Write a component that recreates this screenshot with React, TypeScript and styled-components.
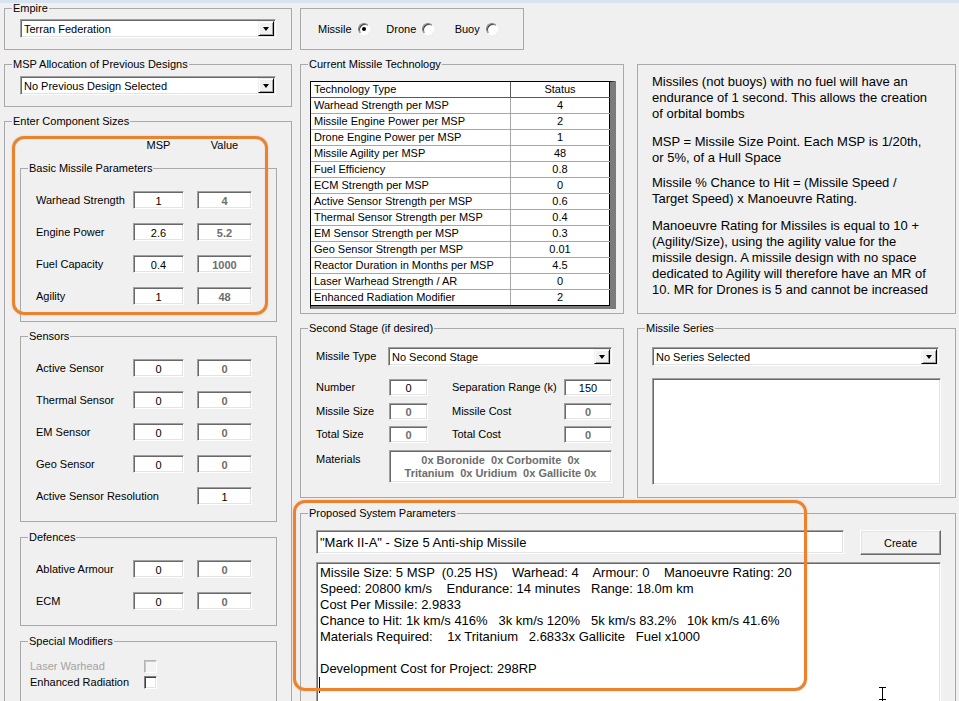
import React from "react";
import styled, { createGlobalStyle } from "styled-components";

const GlobalStyle = createGlobalStyle`
  html, body {
    margin: 0;
    padding: 0;
    background: #f0f0f0;
  }
  body {
    font-family: "Liberation Sans", Arial, sans-serif;
    font-size: 11px;
    color: #000;
    overflow: hidden;
  }
`;

const Window = styled.div`
  position: relative;
  width: 959px;
  height: 701px;
  overflow: hidden;
  background: #f0f0f0;
`;

const TitleEdge = styled.div`
  height: 3px;
  background: #d8e3f1;
`;

const Columns = styled.div`
  display: flex;
  gap: 8px;
  padding-left: 4px;
`;

const LeftColumn = styled.div`
  width: 288px;
  display: flex;
  flex-direction: column;
  gap: 9px;
`;

const RightArea = styled.div`
  width: 656px;
  display: flex;
  flex-direction: column;
`;

const PanelRow = styled.div<{ $mt: number }>`
  display: flex;
  align-items: flex-start;
  gap: 13px;
  margin-top: ${(p) => p.$mt}px;
`;

const Group = styled.fieldset<{ $w: number; $h: number; $mt?: number }>`
  box-sizing: border-box;
  width: ${(p) => p.$w}px;
  height: ${(p) => p.$h}px;
  margin: ${(p) => p.$mt ?? 0}px 0 0 0;
  padding: 0;
  border: 1px solid #a9a9a9;
  min-width: 0;
  flex-shrink: 0;
`;

const Legend = styled.legend`
  margin-left: 7px;
  padding: 0 1px;
  font-size: 11px;
  line-height: 10px;
  white-space: nowrap;
`;

const GroupBody = styled.div<{ $pt: number; $pl: number }>`
  display: flex;
  flex-direction: column;
  padding: ${(p) => p.$pt}px 0 0 ${(p) => p.$pl}px;
`;

const sunken = `
  box-sizing: border-box;
  background: #fff;
  border: 1px solid;
  border-color: #a0a0a0 #fff #fff #a0a0a0;
  box-shadow: inset 1px 1px 0 #696969, inset -1px -1px 0 #e3e3e3;
`;

const Combo = styled.div<{ $w: number }>`
  ${sunken}
  width: ${(p) => p.$w}px;
  height: 19px;
  display: flex;
  align-items: center;
  padding: 0 1px 0 3px;
  flex-shrink: 0;
`;

const ComboText = styled.span`
  flex: 1;
  white-space: nowrap;
  overflow: hidden;
`;

const DropButton = styled.span`
  box-sizing: border-box;
  width: 16px;
  height: 15px;
  background: #f0f0f0;
  border: 1px solid;
  border-color: #f0f0f0 #000 #000 #f0f0f0;
  box-shadow: inset 1px 1px 0 #fff, inset -1px -1px 0 #a0a0a0;
  display: flex;
  align-items: center;
  justify-content: center;

  &::after {
    content: "";
    border-left: 3.5px solid transparent;
    border-right: 3.5px solid transparent;
    border-top: 4px solid #000;
    margin-top: 1px;
  }
`;

const Field = styled.div<{ $w: number; $h?: number; $ro?: boolean; $ml?: number }>`
  ${sunken}
  width: ${(p) => p.$w}px;
  height: ${(p) => p.$h ?? 18}px;
  margin-left: ${(p) => p.$ml ?? 0}px;
  flex-shrink: 0;
  display: flex;
  align-items: center;
  justify-content: center;
  padding-top: 1px;
  color: ${(p) => (p.$ro ? "#6d6d6d" : "#000")};
  font-weight: ${(p) => (p.$ro ? "bold" : "normal")};
`;

/* ---------- left column ---------- */

const ColumnHeads = styled.div`
  display: grid;
  grid-template-columns: 51px 55px;
  column-gap: 13px;
  padding-left: 113px;
  height: 14px;
  line-height: 14px;
  text-align: center;
`;

const ParamList = styled.div`
  display: flex;
  flex-direction: column;
  gap: 14px;
`;

const ParamRow = styled.div`
  display: flex;
  align-items: center;
  height: 18px;
`;

const ParamLabel = styled.span<{ $w: number }>`
  width: ${(p) => p.$w}px;
  flex-shrink: 0;
  white-space: nowrap;
`;

const CheckRow = styled.div`
  display: flex;
  align-items: center;
  height: 16px;
`;

const CheckLabel = styled.span<{ $off?: boolean }>`
  width: 114px;
  white-space: nowrap;
  color: ${(p) => (p.$off ? "#a3a3a3" : "#000")};
`;

const CheckBox = styled.span<{ $off?: boolean }>`
  box-sizing: border-box;
  width: 13px;
  height: 13px;
  border: 1px solid;
  border-color: ${(p) => (p.$off ? "#b4b4b4 #fff #fff #b4b4b4" : "#808080 #fff #fff #808080")};
  box-shadow: ${(p) => (p.$off ? "inset 1px 1px 0 #c8c8c8" : "inset 1px 1px 0 #404040, inset -1px -1px 0 #e3e3e3")};
  background: ${(p) => (p.$off ? "#f4f4f4" : "#fff")};
`;

/* ---------- missile type ---------- */

const TypeBox = styled.div`
  box-sizing: border-box;
  width: 224px;
  height: 42px;
  margin-top: 5px;
  border: 1px solid #a9a9a9;
  display: flex;
  align-items: center;
  padding-left: 17px;
`;

const TypeOption = styled.span`
  width: 72px;
  display: flex;
  align-items: center;
  gap: 6px;
`;

const Radio = styled.span<{ $on?: boolean }>`
  box-sizing: border-box;
  width: 12px;
  height: 12px;
  border-radius: 50%;
  border: 1px solid;
  border-color: #808080 #fff #fff #808080;
  box-shadow: inset 1px 1px 0 #404040;
  background: #fff;
  display: flex;
  align-items: center;
  justify-content: center;

  &::after {
    content: "";
    display: ${(p) => (p.$on ? "block" : "none")};
    width: 4px;
    height: 4px;
    border-radius: 50%;
    background: #000;
  }
`;

/* ---------- technology table ---------- */

const TechGrid = styled.div`
  box-sizing: border-box;
  width: 306px;
  margin: 12px 0 0 9px;
  background: #fff;
  border-top: 1px solid #000;
  border-left: 1px solid #000;
  border-right: 6px solid #7b7b7b;
  border-bottom: 3px solid #7b7b7b;
`;

const TechRow = styled.div<{ $head?: boolean }>`
  box-sizing: border-box;
  display: flex;
  height: 16px;
  border-bottom: 1px solid ${(p) => (p.$head ? "#5a5a5a" : "#a7a7a7")};

  &:last-child {
    border-bottom-color: #000;
  }
`;

const TechName = styled.span<{ $head?: boolean }>`
  width: 200px;
  box-sizing: border-box;
  padding-left: 3px;
  line-height: 15px;
  white-space: nowrap;
  border-right: 1px solid ${(p) => (p.$head ? "#5a5a5a" : "#a7a7a7")};
`;

const TechValue = styled.span`
  flex: 1;
  text-align: center;
  line-height: 15px;
  border-right: 1px solid #000;
`;

/* ---------- info ---------- */

const InfoBox = styled.div`
  box-sizing: border-box;
  width: 319px;
  height: 250px;
  margin-top: 5px;
  border: 1px solid #a9a9a9;
  padding: 9px 0 0 14px;
  font-size: 13px;
  line-height: 16px;
`;

const InfoPara = styled.p<{ $mb: number }>`
  margin: 0 0 ${(p) => p.$mb}px;
  white-space: nowrap;
`;

/* ---------- second stage ---------- */

const StageRow = styled.div<{ $mt: number; $top?: boolean }>`
  display: flex;
  align-items: ${(p) => (p.$top ? "flex-start" : "center")};
  margin-top: ${(p) => p.$mt}px;
`;

const StageLabel = styled.span<{ $w: number; $ml?: number; $mt?: number }>`
  width: ${(p) => p.$w}px;
  margin-left: ${(p) => p.$ml ?? 0}px;
  margin-top: ${(p) => p.$mt ?? 0}px;
  flex-shrink: 0;
  white-space: nowrap;
  line-height: 13px;
`;

const MaterialsBox = styled.div`
  ${sunken}
  width: 223px;
  height: 33px;
  display: flex;
  flex-direction: column;
  justify-content: center;
  align-items: center;
  font-weight: bold;
  color: #6d6d6d;
  line-height: 13px;
  white-space: pre;
`;

const ListBox = styled.div`
  ${sunken}
  width: 289px;
  height: 107px;
  margin-top: 12px;
`;

/* ---------- proposed ---------- */

const NameRow = styled.div`
  display: flex;
  align-items: flex-start;
  gap: 16px;
  margin: 12px 0 0 15px;
`;

const NameField = styled.div`
  ${sunken}
  width: 528px;
  height: 24px;
  display: flex;
  align-items: center;
  padding-left: 3px;
  font-size: 13px;
  white-space: nowrap;
`;

const CreateButton = styled.button`
  box-sizing: border-box;
  width: 81px;
  height: 25px;
  padding: 0;
  font-family: "Liberation Sans", Arial, sans-serif;
  font-size: 11px;
  color: #000;
  background: #f2f2f2;
  border: 1px solid;
  border-color: #fff #696969 #696969 #fff;
  box-shadow: inset -1px -1px 0 #a0a0a0, inset 1px 1px 0 #e3e3e3;
`;

const Memo = styled.div`
  ${sunken}
  width: 625px;
  height: 200px;
  margin: 7px 0 0 15px;
  padding: 2px 0 0 3px;
  font-size: 13px;
  line-height: 16px;
  white-space: pre;
`;

const Caret = styled.span`
  display: inline-block;
  width: 1px;
  height: 16px;
  margin-left: -1px;
  background: #000;
  vertical-align: top;
`;

/* ---------- overlays ---------- */

const Highlight = styled.div<{ $x: number; $y: number; $w: number; $h: number }>`
  position: absolute;
  left: ${(p) => p.$x}px;
  top: ${(p) => p.$y}px;
  width: ${(p) => p.$w}px;
  height: ${(p) => p.$h}px;
  box-sizing: border-box;
  border: 3px solid #e9832f;
  border-radius: 12px;
  box-shadow: 0 0 2px rgba(233, 131, 47, 0.45), inset 0 0 1px rgba(233, 131, 47, 0.45);
  pointer-events: none;
`;

const PointerCursor = styled.svg`
  position: absolute;
  left: 878px;
  top: 686px;
`;

const techRows: [string, string][] = [
  ["Warhead Strength per MSP", "4"],
  ["Missile Engine Power per MSP", "2"],
  ["Drone Engine Power per MSP", "1"],
  ["Missile Agility per MSP", "48"],
  ["Fuel Efficiency", "0.8"],
  ["ECM Strength per MSP", "0"],
  ["Active Sensor Strength per MSP", "0.6"],
  ["Thermal Sensor Strength per MSP", "0.4"],
  ["EM Sensor Strength per MSP", "0.3"],
  ["Geo Sensor Strength per MSP", "0.01"],
  ["Reactor Duration in Months per MSP", "4.5"],
  ["Laser Warhead Strength / AR", "0"],
  ["Enhanced Radiation Modifier", "2"],
];

const basicParams: [string, string, string][] = [
  ["Warhead Strength", "1", "4"],
  ["Engine Power", "2.6", "5.2"],
  ["Fuel Capacity", "0.4", "1000"],
  ["Agility", "1", "48"],
];

const sensors: [string, string, string][] = [
  ["Active Sensor", "0", "0"],
  ["Thermal Sensor", "0", "0"],
  ["EM Sensor", "0", "0"],
  ["Geo Sensor", "0", "0"],
];

const defences: [string, string, string][] = [
  ["Ablative Armour", "0", "0"],
  ["ECM", "0", "0"],
];

const summary = [
  "Missile Size: 5 MSP  (0.25 HS)    Warhead: 4    Armour: 0    Manoeuvre Rating: 20",
  "Speed: 20800 km/s    Endurance: 14 minutes   Range: 18.0m km",
  "Cost Per Missile: 2.9833",
  "Chance to Hit: 1k km/s 416%   3k km/s 120%   5k km/s 83.2%   10k km/s 41.6%",
  "Materials Required:    1x Tritanium   2.6833x Gallicite   Fuel x1000",
  "",
  "Development Cost for Project: 298RP",
].join("\n");

const ComboBox = ({ w, text }: { w: number; text: string }) => (
  <Combo $w={w}>
    <ComboText>{text}</ComboText>
    <DropButton />
  </Combo>
);

const ParamRows = ({ rows }: { rows: [string, string, string][] }) => (
  <>
    {rows.map(([label, msp, value]) => (
      <ParamRow key={label}>
        <ParamLabel $w={97}>{label}</ParamLabel>
        <Field $w={51}>{msp}</Field>
        <Field $w={55} $ml={13} $ro>
          {value}
        </Field>
      </ParamRow>
    ))}
  </>
);

export default function App() {
  return (
    <Window>
      <GlobalStyle />
      <TitleEdge />
      <Columns>
        <LeftColumn>
          <Group $w={288} $h={47}>
            <Legend>Empire</Legend>
            <GroupBody $pt={6} $pl={15}>
              <ComboBox w={256} text="Terran Federation" />
            </GroupBody>
          </Group>

          <Group $w={288} $h={48}>
            <Legend>MSP Allocation of Previous Designs</Legend>
            <GroupBody $pt={7} $pl={15}>
              <ComboBox w={256} text="No Previous Design Selected" />
            </GroupBody>
          </Group>

          <Group $w={288} $h={600}>
            <Legend>Enter Component Sizes</Legend>
            <GroupBody $pt={12} $pl={15}>
              <ColumnHeads>
                <span>MSP</span>
                <span>Value</span>
              </ColumnHeads>

              <Group $w={257} $h={159} $mt={11}>
                <Legend>Basic Missile Parameters</Legend>
                <GroupBody $pt={18} $pl={15}>
                  <ParamList>
                    <ParamRows rows={basicParams} />
                  </ParamList>
                </GroupBody>
              </Group>

              <Group $w={257} $h={191} $mt={9}>
                <Legend>Sensors</Legend>
                <GroupBody $pt={18} $pl={15}>
                  <ParamList>
                    <ParamRows rows={sensors} />
                    <ParamRow>
                      <ParamLabel $w={161}>Active Sensor Resolution</ParamLabel>
                      <Field $w={55}>1</Field>
                    </ParamRow>
                  </ParamList>
                </GroupBody>
              </Group>

              <Group $w={257} $h={94} $mt={10}>
                <Legend>Defences</Legend>
                <GroupBody $pt={18} $pl={15}>
                  <ParamList>
                    <ParamRows rows={defences} />
                  </ParamList>
                </GroupBody>
              </Group>

              <Group $w={257} $h={80} $mt={10}>
                <Legend>Special Modifiers</Legend>
                <GroupBody $pt={12} $pl={9}>
                  <CheckRow>
                    <CheckLabel $off>Laser Warhead</CheckLabel>
                    <CheckBox $off />
                  </CheckRow>
                  <CheckRow>
                    <CheckLabel>Enhanced Radiation</CheckLabel>
                    <CheckBox />
                  </CheckRow>
                </GroupBody>
              </Group>
            </GroupBody>
          </Group>
        </LeftColumn>

        <RightArea>
          <TypeBox>
            <TypeOption>
              Missile <Radio $on />
            </TypeOption>
            <TypeOption>
              Drone <Radio />
            </TypeOption>
            <TypeOption>
              Buoy <Radio />
            </TypeOption>
          </TypeBox>

          <PanelRow $mt={9}>
            <Group $w={324} $h={255}>
              <Legend>Current Missile Technology</Legend>
              <TechGrid>
                <TechRow $head>
                  <TechName $head>Technology Type</TechName>
                  <TechValue>Status</TechValue>
                </TechRow>
                {techRows.map(([name, value]) => (
                  <TechRow key={name}>
                    <TechName>{name}</TechName>
                    <TechValue>{value}</TechValue>
                  </TechRow>
                ))}
              </TechGrid>
            </Group>

            <InfoBox>
              <InfoPara $mb={12}>
                Missiles (not buoys) with no fuel will have an
                <br />
                endurance of 1 second. This allows the creation
                <br />
                of orbital bombs
              </InfoPara>
              <InfoPara $mb={9}>
                MSP = Missile Size Point. Each MSP is 1/20th,
                <br />
                or 5%, of a Hull Space
              </InfoPara>
              <InfoPara $mb={11}>
                Missile % Chance to Hit = (Missile Speed /
                <br />
                Target Speed) x Manoeuvre Rating.
              </InfoPara>
              <InfoPara $mb={0}>
                Manoeuvre Rating for Missiles is equal to 10 +
                <br />
                (Agility/Size), using the agility value for the
                <br />
                missile design. A missile design with no space
                <br />
                dedicated to Agility will therefore have an MR of
                <br />
                10. MR for Drones is 5 and cannot be increased
              </InfoPara>
            </InfoBox>
          </PanelRow>

          <PanelRow $mt={9}>
            <Group $w={324} $h={175}>
              <Legend>Second Stage (if desired)</Legend>
              <GroupBody $pt={0} $pl={15}>
                <StageRow $mt={14}>
                  <StageLabel $w={72}>Missile Type</StageLabel>
                  <ComboBox w={224} text="No Second Stage" />
                </StageRow>
                <StageRow $mt={13}>
                  <StageLabel $w={73}>Number</StageLabel>
                  <Field $w={39} $h={17}>0</Field>
                  <StageLabel $w={112} $ml={24}>Separation Range (k)</StageLabel>
                  <Field $w={48} $h={17}>150</Field>
                </StageRow>
                <StageRow $mt={7}>
                  <StageLabel $w={73}>Missile Size</StageLabel>
                  <Field $w={39} $h={17} $ro>0</Field>
                  <StageLabel $w={112} $ml={24}>Missile Cost</StageLabel>
                  <Field $w={48} $h={17} $ro>0</Field>
                </StageRow>
                <StageRow $mt={6}>
                  <StageLabel $w={73}>Total Size</StageLabel>
                  <Field $w={39} $h={17} $ro>0</Field>
                  <StageLabel $w={112} $ml={24}>Total Cost</StageLabel>
                  <Field $w={48} $h={17} $ro>0</Field>
                </StageRow>
                <StageRow $mt={7} $top>
                  <StageLabel $w={73} $mt={3}>Materials</StageLabel>
                  <MaterialsBox>
                    <span>0x Boronide  0x Corbomite  0x</span>
                    <span>Tritanium  0x Uridium  0x Gallicite 0x</span>
                  </MaterialsBox>
                </StageRow>
              </GroupBody>
            </Group>

            <Group $w={319} $h={175}>
              <Legend>Missile Series</Legend>
              <GroupBody $pt={14} $pl={14}>
                <ComboBox w={287} text="No Series Selected" />
                <ListBox />
              </GroupBody>
            </Group>
          </PanelRow>

          <Group $w={656} $h={200} $mt={10}>
            <Legend>Proposed System Parameters</Legend>
            <NameRow>
              <NameField>"Mark II-A" - Size 5 Anti-ship Missile</NameField>
              <CreateButton type="button">Create</CreateButton>
            </NameRow>
            <Memo>
              {summary}
              {"\n"}
              <Caret />
            </Memo>
          </Group>
        </RightArea>
      </Columns>

      <Highlight $x={12} $y={136} $w={256} $h={179} />
      <Highlight $x={293} $y={500} $w={514} $h={191} />
      <PointerCursor width="9" height="15" viewBox="0 0 9 15">
        <path d="M1 1.5H8M4.5 1.5V15M1 13.5H8" stroke="#000" strokeWidth="1" fill="none" />
      </PointerCursor>
    </Window>
  );
}
